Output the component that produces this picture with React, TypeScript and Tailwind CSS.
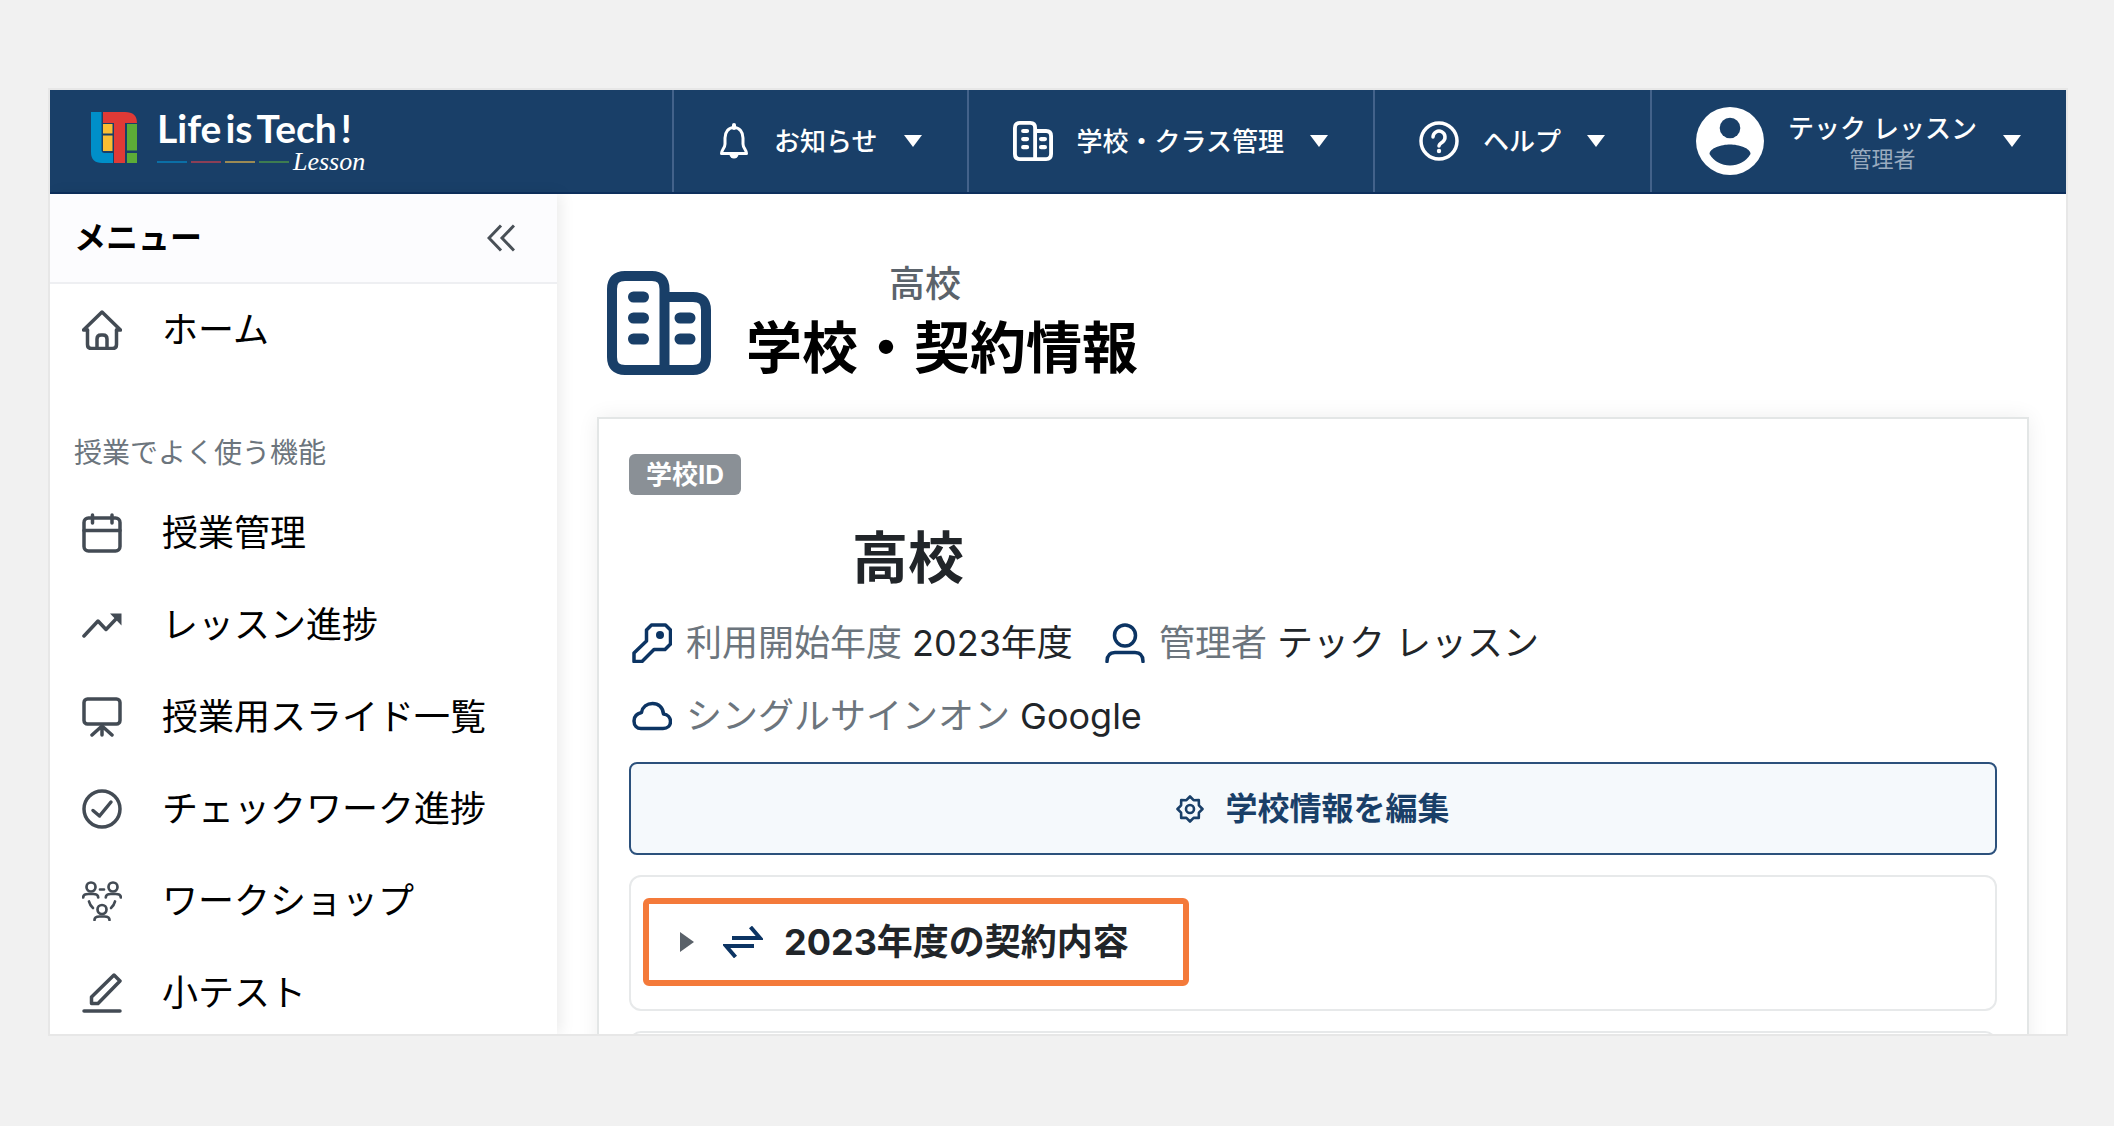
import React from 'react';
import { clsx } from 'clsx';

interface IconProps {
    className?: string;
}

const BuildingIcon: React.FC<IconProps> = ({ className }) => (
    <svg viewBox="0 0 104 104" fill="none" stroke="currentColor" strokeWidth="10" className={className} aria-hidden="true">
        <path d="M57.500 99V18Q57.500 5 45 5H18Q5 5 5 18V86Q5 99 18 99H86Q99 99 99 86V39Q99 26 86 26H57.500" />
        <path d="M26.500 26h10M26.500 47h10M26.500 68h10M73 47h10M73 68h10" strokeWidth="11" strokeLinecap="round" />
    </svg>
);

const BellIcon: React.FC<IconProps> = ({ className }) => (
    <svg viewBox="0 0 32 36" fill="none" stroke="currentColor" strokeWidth="3" strokeLinejoin="round" className={className} aria-hidden="true">
        <path d="M16 4.500C10.500 4.500 7 9 7 15v6c0 4-3.500 6-3.500 9.500h25C28.500 27 25 25 25 21v-6c0-6-3.500-10.500-9-10.500z" />
        <path d="M16 2v3" strokeWidth="4" strokeLinecap="round" />
        <path d="M11.500 31.500a4.500 4 0 0 0 9 0z" fill="currentColor" stroke="none" />
    </svg>
);

const HelpIcon: React.FC<IconProps> = ({ className }) => (
    <svg viewBox="0 0 40 40" fill="none" stroke="currentColor" strokeWidth="3.500" strokeLinecap="round" className={className} aria-hidden="true">
        <circle cx="20" cy="20" r="18" />
        <path d="M14 16a6 6 0 1 1 9.500 5c-2.500 1.700-3.500 2.500-3.500 4" />
        <circle cx="20" cy="30" r="2.200" fill="currentColor" stroke="none" />
    </svg>
);

const AvatarIcon: React.FC<IconProps> = ({ className }) => (
    <svg viewBox="0 0 68 68" className={className} aria-hidden="true">
        <circle cx="34" cy="34" r="34" fill="#fff" />
        <circle cx="34" cy="21" r="10.300" fill="#193f68" />
        <path d="M13.500 47c0-6 12-9.500 20.500-9.500S54.500 41 54.500 47C50 54.500 42.500 58.500 34 58.500S18 54.500 13.500 47z" fill="#193f68" />
    </svg>
);

const Caret: React.FC<IconProps> = ({ className }) => (
    <svg viewBox="0 0 18 12" className={clsx('h-3 w-[18px] shrink-0', className)} aria-hidden="true">
        <path d="M0 0h18L9 12z" fill="currentColor" />
    </svg>
);

const LineIcon: React.FC<{ children: React.ReactNode }> = ({ children }) => (
    <svg
        viewBox="0 0 40 40"
        fill="none"
        stroke="currentColor"
        strokeWidth="3.500"
        strokeLinecap="round"
        strokeLinejoin="round"
        className="size-10 shrink-0"
        aria-hidden="true"
    >
        {children}
    </svg>
);

const HomeIcon = () => (
    <LineIcon>
        <path d="M5.500 20h-4L20 2l18.500 18h-4" />
        <path d="M5.500 20v14.500q0 4 4 4h21q4 0 4-4V20" />
        <path d="M15 38V29q0-4 4-4h2q4 0 4 4v9" />
    </LineIcon>
);

const MENU = [
    {
        label: '授業管理',
        icon: (
            <LineIcon>
                <rect x="2" y="5" width="36" height="33" rx="4.500" />
                <path d="M2 17.500h36M10.500 2v8M30 2v8" />
            </LineIcon>
        ),
    },
    {
        label: 'レッスン進捗',
        icon: (
            <LineIcon>
                <path d="M2 31L16 16l8 8.500L34 14" />
                <path d="M28 8.500h11.500v12z" fill="currentColor" stroke="none" />
            </LineIcon>
        ),
    },
    {
        label: '授業用スライド一覧',
        icon: (
            <LineIcon>
                <rect x="2" y="2" width="36" height="25" rx="3.500" />
                <path d="M20 28v10M20 29l-10 9M20 29l10 9" />
            </LineIcon>
        ),
    },
    {
        label: 'チェックワーク進捗',
        icon: (
            <LineIcon>
                <circle cx="20" cy="20" r="18" />
                <path d="M11 21.500l6.500 5.500L29 13" />
            </LineIcon>
        ),
    },
    {
        label: 'ワークショップ',
        icon: (
            <LineIcon>
                <g strokeWidth="2.700">
                    <circle cx="9" cy="6" r="4.500" />
                    <circle cx="31" cy="6" r="4.500" />
                    <circle cx="20" cy="28.500" r="4.500" />
                    <path d="M1.200 16.500q0-3.500 5-3.500h5q5 0 5 3.500M23.800 16.500q0-3.500 5-3.500h5q5 0 5 3.500M12.500 39q0-3.500 5-3.500h5q5 0 5 3.500" />
                    <path d="M18 8.500h4M7 20.500q1 4 4 6.500M33 20.500q-1 4-4 6.500" />
                </g>
            </LineIcon>
        ),
    },
    {
        label: '小テスト',
        icon: (
            <LineIcon>
                <path d="M32 2l6 6-22 22.500H9.500V24z" />
                <path d="M2 38h36" />
            </LineIcon>
        ),
    },
];

const Logo = () => (
    <a href="#" className="flex items-start text-white">
        <svg viewBox="0 0 46 51" className="mt-0.5 h-[51px] w-[46px]" aria-hidden="true">
            <path d="M0 0h10.500v38q0 3 3 3H22v10H11Q0 51 0 40z" fill="#008fc9" />
            <path d="M12 0h22q12 0 12 11H34v40H23V11H12z" fill="#e03a36" />
            <path d="M12 12h9.500v9.500H12zM12 23.500h9.500v15.500H12z" fill="#f9bd33" />
            <path d="M36 12h10v26.500H36zM36 41h10v10H36z" fill="#5cac37" />
        </svg>
        <span className="ml-5 flex flex-col">
            <span className="flex gap-1 font-[Lato] text-[39px] leading-9 font-bold">
                <span>Life</span>
                <span>is</span>
                <span>Tech</span>
                <span>!</span>
            </span>
            <span className="mt-1 flex h-6 items-center gap-1">
                <span className="h-[2px] w-[30px] bg-[#0b6fa6]" />
                <span className="h-[2px] w-[30px] bg-[#8b3f56]" />
                <span className="h-[2px] w-[30px] bg-[#9b8a54]" />
                <span className="h-[2px] w-[30px] bg-[#3d7c50]" />
                <span className="font-['Liberation_Serif'] text-[26px] leading-6 italic">Lesson</span>
            </span>
        </span>
    </a>
);

const NavItem: React.FC<{ icon: React.ReactNode; children: React.ReactNode }> = ({ icon, children }) => (
    <button type="button" className="flex items-center border-l-2 border-[#43628a] pr-[45px] pl-11 text-[26px] font-medium">
        {icon}
        <span className="ml-6 flex flex-col items-center whitespace-nowrap">{children}</span>
        <Caret className="ml-[26px]" />
    </button>
);

const Header = () => (
    <header className="flex h-[104px] shrink-0 border-b-2 border-[#0d2f5c] bg-[#193f68] text-white">
        <div className="flex-1 pt-5 pl-[41px]">
            <Logo />
        </div>
        <nav className="flex">
            <NavItem icon={<BellIcon className="h-9 w-8" />}>お知らせ</NavItem>
            <NavItem icon={<BuildingIcon className="size-10" />}>学校・クラス管理</NavItem>
            <NavItem icon={<HelpIcon className="size-10" />}>ヘルプ</NavItem>
            <NavItem icon={<AvatarIcon className="size-[68px]" />}>
                <span className="pt-1 leading-8">テック レッスン</span>
                <span className="text-[22px] leading-7 font-normal text-[#9aabbf]">管理者</span>
            </NavItem>
        </nav>
    </header>
);

const Sidebar = () => (
    <aside className="w-[507px] shrink-0 bg-white shadow-[4px_0_14px_rgba(0,0,0,0.08)]">
        <div className="flex h-[90px] items-center justify-between border-b-2 border-[#eeeff2] bg-[#fcfcfe] pr-[42px] pl-6">
            <h2 className="text-[32px] font-bold text-black">メニュー</h2>
            <button type="button" aria-label="メニューを閉じる" className="text-[#495057]">
                <svg viewBox="0 0 28 28" fill="none" stroke="currentColor" strokeWidth="3" className="size-7" aria-hidden="true">
                    <path d="M14 1.500L2 14l12 12.500M27 1.500L15 14l12 12.500" />
                </svg>
            </button>
        </div>
        <nav className="text-[36px] text-black">
            <a href="#" className="flex h-[92px] items-center gap-10 pl-8">
                <span className="text-[#434b54]"><HomeIcon /></span>
                ホーム
            </a>
            <h3 className="mt-[57px] pl-6 text-[28px] leading-10 text-[#6c757d]">授業でよく使う機能</h3>
            <ul className="mt-[14px]">
                {MENU.map((item) => (
                    <li key={item.label}>
                        <a href="#" className="flex h-[92px] items-center gap-10 pl-8 whitespace-nowrap">
                            <span className="text-[#434b54]">{item.icon}</span>
                            {item.label}
                        </a>
                    </li>
                ))}
            </ul>
        </nav>
    </aside>
);

const Info: React.FC<{ icon: React.ReactNode; label: string; value: string }> = ({ icon, label, value }) => (
    <div className="flex h-12 items-center text-[36px]">
        <span className="mr-[14px] text-[#0c3463]">{icon}</span>
        <dt className="mr-[10px] text-[#6c757d]">{label}</dt>
        <dd className="text-[#212529]">{value}</dd>
    </div>
);

const SchoolCard = () => (
    <section className="mt-[33px] border-2 border-[#e3e6e6] bg-white px-[30px] pt-[35px] shadow-[0_0_20px_rgba(0,0,0,0.07)]">
        <span className="flex h-[41px] w-fit items-center rounded-md bg-[#8a9096] px-[17px] text-[26px] font-bold text-white">学校ID</span>
        <h2 className="mt-[27px] pl-[223px] text-[56px] leading-[72px] font-bold text-[#212529]">高校</h2>
        <dl className="mt-[25px] flex flex-wrap gap-x-8 gap-y-[25px] pl-[3px]">
            <Info
                icon={
                    <LineIcon>
                        <path d="M19.500 2h14L38.500 7v14L33 26.500H22L10 38.500H2V30L14.500 18V7z" />
                        <circle cx="28" cy="12" r="4" fill="currentColor" stroke="none" />
                    </LineIcon>
                }
                label="利用開始年度"
                value="2023年度"
            />
            <Info
                icon={
                    <LineIcon>
                        <circle cx="20" cy="12.500" r="10.500" />
                        <path d="M2 38.500c0-6 2.500-9 8-9h20c5.500 0 8 3 8 9" />
                    </LineIcon>
                }
                label="管理者"
                value="テック レッスン"
            />
            <div className="basis-full">
                <Info
                    icon={
                        <LineIcon>
                            <path d="M9 32.500h22c4.500 0 7.500-3 7.500-7s-3-7-7-7.500C31 11.500 26.500 7.500 20.500 7.500c-5.500 0-10 3.500-11 9C5 17.500 2 20.500 2 25s3 7.500 7 7.500z" />
                        </LineIcon>
                    }
                    label="シングルサインオン"
                    value="Google"
                />
            </div>
        </dl>
        <button type="button" className="mt-[22px] flex h-[93px] w-full items-center justify-center gap-[21px] rounded-lg border-2 border-[#2c517c] bg-[#f5f9fc] text-[32px] font-bold text-[#193f68]">
            <svg viewBox="0 0 28 28" fill="none" stroke="currentColor" strokeWidth="2.600" strokeLinejoin="round" className="size-7" aria-hidden="true">
                <path d="M14 1.500l3.600 3.700 5.200-.1.100 5.200 3.600 3.700-3.600 3.700-.1 5.200-5.200-.1L14 26.500l-3.600-3.700-5.200.1-.1-5.200L1.500 14l3.600-3.700.1-5.200 5.200.1z" />
                <circle cx="14" cy="14" r="4" />
            </svg>
            学校情報を編集
        </button>
        <div className="mt-5 h-[136px] rounded-xl border-2 border-[#e7e9ea] px-3 pt-[21px]">
            <button type="button" aria-expanded="false" className="flex h-[88px] items-center rounded-md border-[6px] border-[#f47a3a] pr-[54px] pl-[31px] text-[36px] font-bold whitespace-nowrap text-[#212529]">
                <svg viewBox="0 0 14 20" className="h-5 w-[14px]" aria-hidden="true">
                    <path d="M0 0l14 10L0 20z" fill="#5a6169" />
                </svg>
                <svg viewBox="0 0 40 32" fill="none" stroke="#0c3463" strokeWidth="4" className="mr-[21px] ml-[29px] h-8 w-10" aria-hidden="true">
                    <path d="M9 12h28L27.500 1M31 20H3l9.500 11" />
                </svg>
                2023年度の契約内容
            </button>
        </div>
        <div className="mt-5 h-[136px] rounded-xl border-2 border-[#e7e9ea]" />
    </section>
);

const App: React.FC = () => (
    <div className="h-screen bg-[#f1f1f1] pt-[88px] pr-[46px] pb-[90px] pl-12 font-[Inter,'Noto_Sans_CJK_JP',sans-serif]">
        <div className="flex h-full flex-col overflow-hidden border-2 border-[#e7e7e7] bg-white">
            <Header />
            <div className="flex min-h-0 flex-1">
                <Sidebar />
                <main className="min-w-0 flex-1 pt-[62px] pr-[37px] pl-10">
                    <div className="flex items-center gap-[35px] pl-[10px]">
                        <BuildingIcon className="mt-1.5 size-[104px] text-[#193f68]" />
                        <div>
                            <p className="pl-[143px] text-[36px] leading-[56px] font-medium text-[#5b636b]">高校</p>
                            <h1 className="text-[56px] leading-[72px] font-bold text-black">学校・契約情報</h1>
                        </div>
                    </div>
                    <SchoolCard />
                </main>
            </div>
        </div>
    </div>
);

export default App;
